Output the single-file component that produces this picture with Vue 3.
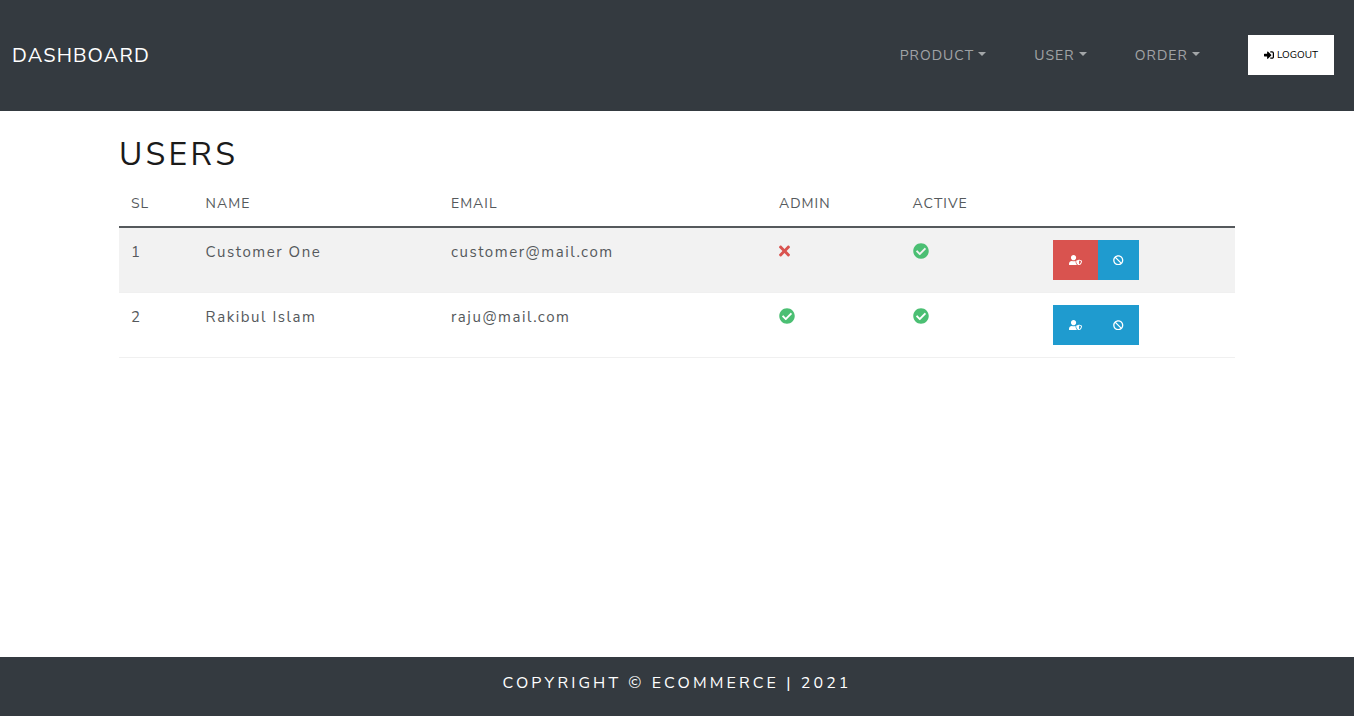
<script setup>
const users = [
  { id: 1, name: 'Customer One', email: 'customer@mail.com', admin: false, active: true },
  { id: 2, name: 'Rakibul Islam', email: 'raju@mail.com', admin: true, active: true },
]
const check = 'M504 256c0 136.967-111.033 248-248 248S8 392.967 8 256 119.033 8 256 8s248 111.033 248 248zM227.314 387.314l184-184c6.248-6.248 6.248-16.379 0-22.627l-22.627-22.627c-6.248-6.249-16.379-6.249-22.628 0L216 308.118l-70.059-70.059c-6.248-6.248-16.379-6.248-22.628 0l-22.627 22.627c-6.248 6.248-6.248 16.379 0 22.627l104 104c6.249 6.249 16.379 6.249 22.628.001z'
const times = 'M242.72 256l100.07-100.07c12.28-12.28 12.28-32.19 0-44.48l-22.24-22.24c-12.28-12.28-32.19-12.28-44.48 0L176 189.28 75.93 89.21c-12.28-12.28-32.19-12.28-44.48 0L9.21 111.45c-12.28 12.28-12.28 32.19 0 44.48L109.28 256 9.21 356.07c-12.28 12.28-12.28 32.19 0 44.48l22.24 22.24c12.28 12.28 32.2 12.28 44.48 0L176 322.72l100.07 100.07c12.28 12.28 32.2 12.28 44.48 0l22.24-22.24c12.28-12.28 12.28-32.19 0-44.48L242.72 256z'
const ban = 'M256 8C119.034 8 8 119.033 8 256s111.034 248 248 248 248-111.034 248-248S392.967 8 256 8zm130.108 117.892c65.448 65.448 70 165.481 20.677 235.637L150.47 105.216c70.204-49.356 170.226-44.735 235.638 20.676zM125.892 386.108c-65.448-65.448-70-165.481-20.677-235.637L361.53 406.784c-70.203 49.356-170.226 44.736-235.638-20.676z'
const signIn = 'M416 448h-84c-6.6 0-12-5.4-12-12v-40c0-6.6 5.4-12 12-12h84c17.7 0 32-14.3 32-32V160c0-17.7-14.3-32-32-32h-84c-6.6 0-12-5.4-12-12V76c0-6.6 5.4-12 12-12h84c53 0 96 43 96 96v192c0 53-43 96-96 96zm-47-201L201 79c-15-15-41-4.5-41 17v96H24c-13.3 0-24 10.7-24 24v96c0 13.3 10.700 24 24 24h136v96c0 21.500 26 32 41 17l168-168c9.300-9.400 9.300-24.600 0-34z'
const userShield = 'M622.3 271.1l-115.2-45c-4.1-1.6-12.6-3.7-22.2 0l-115.2 45c-10.7 4.2-17.7 14-17.7 24.9 0 111.6 68.7 188.8 132.9 213.9 9.6 3.7 18 1.6 22.2 0C558.4 489.8 640 420.5 640 296c0-10.9-7-20.7-17.7-24.9zM496 462.4V273.5l95.500 37.3c-5.6 87.1-60.9 135.4-95.5 151.6zM224 256c70.700 0 128-57.3 128-128S294.7 0 224 0 96 57.3 96 128s57.3 128 128 128zm96 40c0-2.500.8-4.800 1.100-7.200-2.500-.1-4.900-.8-7.500-.8h-16.700c-22.200 10.200-46.900 16-72.900 16s-50.600-5.800-72.900-16h-16.700C60.200 288 0 348.200 0 422.400V464c0 26.500 21.500 48 48 48h352c6.800 0 13.300-1.500 19.100-4-54-42.900-99.100-116.700-99.100-212z'
</script>

<template>
  <div class="page">
    <header class="navbar">
      <a class="brand">DASHBOARD</a>
      <nav class="menu">
        <a class="menu-link">PRODUCT<span class="caret"></span></a>
        <a class="menu-link">USER<span class="caret"></span></a>
        <a class="menu-link">ORDER<span class="caret"></span></a>
        <button class="logout">
          <svg class="logout-icon" viewBox="0 0 512 512"><path :d="signIn" /></svg>LOGOUT
        </button>
      </nav>
    </header>

    <main class="content">
      <h1 class="title">USERS</h1>
      <table class="table">
        <colgroup>
          <col class="c-sl" /><col class="c-name" /><col class="c-email" />
          <col class="c-admin" /><col class="c-active" /><col />
        </colgroup>
        <thead>
          <tr>
            <th>SL</th><th>NAME</th><th>EMAIL</th><th>ADMIN</th><th>ACTIVE</th><th></th>
          </tr>
        </thead>
        <tbody>
          <tr v-for="u in users" :key="u.id">
            <td>{{ u.id }}</td>
            <td>{{ u.name }}</td>
            <td>{{ u.email }}</td>
            <td>
              <svg v-if="u.admin" class="status ok" viewBox="0 0 512 512"><path :d="check" /></svg>
              <svg v-else class="status no" viewBox="0 0 352 512"><path :d="times" /></svg>
            </td>
            <td>
              <svg v-if="u.active" class="status ok" viewBox="0 0 512 512"><path :d="check" /></svg>
            </td>
            <td>
              <div class="actions">
                <button class="act act-user" :class="u.admin ? 'info' : 'danger'">
                  <svg class="act-icon wide" viewBox="0 0 640 512"><path :d="userShield" /></svg>
                </button>
                <button class="act act-ban info">
                  <svg class="act-icon" viewBox="0 0 512 512"><path :d="ban" /></svg>
                </button>
              </div>
            </td>
          </tr>
        </tbody>
      </table>
    </main>

    <footer class="footer">COPYRIGHT © ECOMMERCE | 2021</footer>
  </div>
</template>

<style scoped>
.page {
  min-height: 716px;
  display: flex;
  flex-direction: column;
  font-family: "Nunito Sans", Nunito, "Noto Sans", "Open Sans", sans-serif;
  color: #55595c;
  background: #fff;
}
.navbar {
  height: 111px;
  box-sizing: border-box;
  background: #343a40;
  display: flex;
  align-items: center;
  justify-content: space-between;
  padding: 0 20px 1px 12px;
}
.brand {
  color: #fff;
  font-size: 20px;
  letter-spacing: 1.1px;
  font-weight: 400;
}
.menu {
  display: flex;
  align-items: center;
}
.menu-link {
  color: rgba(255, 255, 255, 0.55);
  font-size: 14px;
  letter-spacing: 1.05px;
  margin-right: 48px;
  display: flex;
  align-items: center;
}
.caret {
  margin-left: 4px;
  margin-top: -3px;
  border-top: 4px solid currentColor;
  border-left: 4px solid transparent;
  border-right: 4px solid transparent;
}
.logout {
  width: 86px;
  height: 40px;
  border: 0;
  background: #fff;
  color: #000;
  font: inherit;
  font-size: 10px;
  display: flex;
  align-items: center;
  justify-content: center;
  gap: 3px;
  padding: 0;
}
.logout-icon {
  width: 10px;
  height: 10px;
  fill: currentColor;
}
.content {
  flex: 1;
  width: 1116px;
  margin: 0 auto;
}
.title {
  margin: 24px 0 0;
  font-size: 32px;
  line-height: 40px;
  font-weight: 400;
  letter-spacing: 3.3px;
  color: #1a1a1a;
}
.table {
  width: 100%;
  margin-top: 5px;
  border-collapse: collapse;
  table-layout: fixed;
  font-size: 15px;
  letter-spacing: 1.55px;
}
.c-sl { width: 74.6px; }
.c-name { width: 245.4px; }
.c-email { width: 328px; }
.c-admin { width: 133.6px; }
.c-active { width: 140.4px; }
th {
  text-align: left;
  font-size: 14px;
  letter-spacing: 1px;
  font-weight: 400;
  height: 47px;
  padding: 0 12px;
  box-sizing: border-box;
  border-bottom: 2px solid #55595c;
  vertical-align: middle;
}
td {
  height: 65px;
  box-sizing: border-box;
  padding: 12px;
  vertical-align: top;
  line-height: 24px;
  border-bottom: 1px solid #f0f0f0;
}
tbody tr:nth-child(odd) td {
  background: #f2f2f2;
}
.status {
  display: block;
  margin-top: 3px;
  height: 16px;
}
.status.ok { width: 16px; fill: #4bbf73; }
.status.no { width: 11px; fill: #d9534f; }
.actions {
  display: flex;
}
.act {
  height: 40px;
  border: 0;
  padding: 0;
  display: flex;
  align-items: center;
  justify-content: center;
  color: #fff;
}
.act-user { width: 45px; }
.act-ban { width: 41px; }
.danger { background: #d9534f; }
.info { background: #1f9bcf; }
.act-icon {
  width: 10.5px;
  height: 10.5px;
  fill: currentColor;
}
.act-icon.wide { width: 13px; }
.footer {
  height: 59px;
  box-sizing: border-box;
  padding-bottom: 8px;
  background: #343a40;
  color: #fff;
  display: flex;
  align-items: center;
  justify-content: center;
  font-size: 16px;
  letter-spacing: 3.1px;
  font-weight: 400;
}
</style>
